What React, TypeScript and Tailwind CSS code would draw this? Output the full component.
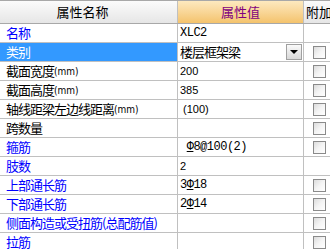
import React from "react";

type Row = {
  label: React.ReactNode;
  blue?: boolean;
  value?: React.ReactNode;
  mono?: boolean;
  check?: boolean;
  selected?: boolean;
  combo?: boolean;
};

const Gang = () => <span className="underline underline-offset-1">Φ</span>;
const Mm = () => <span className="text-[10px] tracking-normal font-['DejaVu_Sans_Condensed',sans-serif]">(mm)</span>;

const rows: Row[] = [
  { label: "名称", blue: true, value: "XLC2", mono: true },
  { label: "类别", selected: true, combo: true, value: "楼层框架梁", check: true },
  { label: <>截面宽度<Mm /></>, value: "200", check: true },
  { label: <>截面高度<Mm /></>, value: "385", check: true },
  { label: <>轴线距梁左边线距离<Mm /></>, value: "\u00a0(100)", check: true },
  { label: "跨数量", value: "", check: true },
  { label: "箍筋", blue: true, value: <>{"\u00a0"}<Gang />8@100(2)</>, mono: true, check: true },
  { label: "肢数", blue: true, value: "2" },
  { label: "上部通长筋", blue: true, value: <>3<Gang />18</>, mono: true, check: true },
  { label: "下部通长筋", blue: true, value: <>2<Gang />14</>, mono: true, check: true },
  { label: "侧面构造或受扭筋(总配筋值)", blue: true, value: "", check: true },
  { label: "拉筋", blue: true, value: "", check: true },
];

const cjk = "font-['Noto_Sans_CJK_SC','Noto_Sans',sans-serif]";

function CheckBox() {
  return (
    <div className="w-[13px] h-[13px] border border-[#8a8a8a] bg-gradient-to-br from-[#dcdcdc] via-[#f4f4f4] to-white" />
  );
}

export default function App() {
  return (
    <div className="w-[330px] h-[249px] overflow-hidden bg-white text-black">
      <div className="w-[334px]">
        {/* en-tete */}
        <div className="flex h-[24px] border-y border-[#a8a8a8]">
          <div className={`w-[178px] border-r border-[#c0c0c0] bg-gradient-to-b from-[#fbfbfb] to-[#e6e6e6] flex items-center justify-center pr-3 text-[13px] ${cjk}`}>
            属性名称
          </div>
          <div className={`w-[126px] border-r border-[#c0c0c0] bg-gradient-to-b from-[#fde9bf] to-[#f4c36c] flex items-center justify-center text-[13px] text-[#800080] ${cjk}`}>
            属性值
          </div>
          <div className={`w-[30px] bg-gradient-to-b from-[#fbfbfb] to-[#e6e6e6] flex items-center justify-center text-[13px] ${cjk}`}>
            附加
          </div>
        </div>

        {rows.map((r, i) => (
          <div key={i} className="flex h-[19px] border-b border-[#c0c0c0]">
            <div
              className={`w-[178px] border-r border-[#c0c0c0] flex items-center pl-[6px] text-[13px] tracking-[-1px] whitespace-nowrap ${cjk} ${
                r.selected ? "bg-[#3399ff] text-white" : r.blue ? "text-[#0000ff]" : "text-black"
              }`}
            >
              {r.label}
            </div>
            <div className="w-[126px] border-r border-[#c0c0c0] flex items-center pl-[2px] whitespace-nowrap">
              {r.combo ? (
                <div className="flex items-center justify-between w-full pr-[1px]">
                  <span className={`text-[13px] tracking-[-1px] ${cjk}`}>{r.value}</span>
                  <div className="w-[16px] h-[16px] border border-[#a0a0a0] bg-gradient-to-b from-[#fafafa] to-[#d8d8d8] flex items-center justify-center">
                    <div className="w-0 h-0 border-l-[4px] border-r-[4px] border-t-[4px] border-l-transparent border-r-transparent border-t-black" />
                  </div>
                </div>
              ) : (
                <span
                  className={
                    r.mono
                      ? "font-['Liberation_Mono',monospace] text-[12px] tracking-[-0.5px]"
                      : "font-['Liberation_Sans',sans-serif] text-[11px]"
                  }
                >
                  {r.value}
                </span>
              )}
            </div>
            <div className="w-[30px] flex items-center justify-center">
              {r.check && <CheckBox />}
            </div>
          </div>
        ))}
      </div>
    </div>
  );
}
